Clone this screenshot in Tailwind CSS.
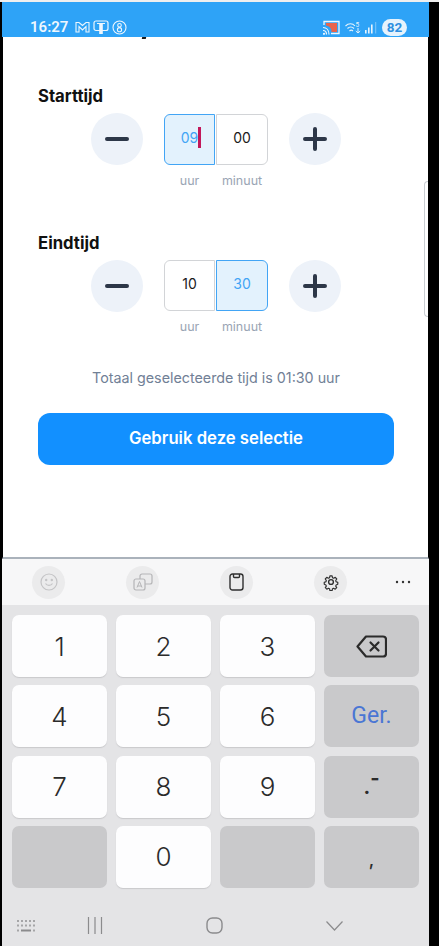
<!DOCTYPE html>
<html lang="en">

<head>
    <meta charset="UTF-8" />
    <meta name="viewport" content="width=device-width, initial-scale=1.0" />
    <script src="https://cdn.jsdelivr.net/npm/@tailwindcss/browser@4"></script>
    <title>Tijd kiezen</title>
</head>

<body class="bg-black font-['Inter',sans-serif]">
    <div class="w-[439px] h-[946px] overflow-hidden">
        <div class="h-[2px] bg-[#efefef]"></div>
        <div class="ml-[2px] w-[427px] h-[944px] flex flex-col">

            <!-- status bar -->
            <header class="h-[35px] bg-[#2ea3f7] flex items-end pl-[28px] pr-[22px] text-white shrink-0">
                <span class="text-[15px] leading-[20px] font-semibold font-['Roboto',sans-serif] text-[#eef7fe]">16:27</span>
                <div class="flex items-center gap-[3px] ml-[7px] h-[20px]">
                    <svg class="w-[15px] h-[12px]" viewBox="0 0 15 12" fill="none" stroke="#eef7fe" stroke-width="1.100"><path d="M1 11V1.500l3 0 3.500 3 3.500-3 3 0V11h-3V5.500L7.500 9 4 5.500V11z" /></svg>
                    <svg class="w-[16px] h-[15px]" viewBox="0 0 16 15" fill="none"><rect x="1" y="1" width="14" height="9.500" rx="2" stroke="#eef7fe" stroke-width="1.200" /><rect x="6.200" y="4" width="3.600" height="10" fill="#eef7fe" /><path d="M4 3.500h8" stroke="#eef7fe" stroke-width="1" /></svg>
                    <svg class="w-[15px] h-[15px]" viewBox="0 0 15 15" fill="none" stroke="#eef7fe" stroke-width="1.100"><circle cx="7.500" cy="7.500" r="6.500" /><circle cx="7.500" cy="5.300" r="1.800" /><circle cx="7.500" cy="9.700" r="2.100" /></svg>
                </div>
                <div class="flex items-center ml-auto h-[20px]">
                    <svg class="w-[17px] h-[15px]" viewBox="0 0 17 15" fill="none"><path d="M1 5V1.500h15v12H8" stroke="#eef7fe" stroke-width="1.300" /><path d="M3 3h11v9H8.500C8.500 8 6.500 6 3 5.500z" fill="#e8644c" /><path d="M0 7.500c3.500 0 6 2.500 6 7M0 10.500c2 0 3.500 1.500 3.500 4" stroke="#eef7fe" stroke-width="1.200" /><circle cx="1" cy="13.800" r="1.100" fill="#eef7fe" /></svg>
                    <svg class="w-[16px] h-[13px] ml-[5px]" viewBox="0 0 16 13" fill="none" stroke="#e6f3fd" stroke-width="1.100"><path d="M.5 5c3-3 7-3 9.500 0M2.500 7.500c2-2 4.500-2 6.500 0M4.500 10c1-1 2.500-1 3.500 0" /><text x="10.500" y="5.500" font-size="6.500" font-family="Roboto" fill="#e6f3fd" stroke="none">5</text><path d="M13 7v5M10.800 10l2.200 2 2.200-2" stroke-width="1" /></svg>
                    <svg class="w-[12px] h-[13px] ml-[4px]" viewBox="0 0 12 13" fill="#e6f3fd"><rect x="0" y="9" width="1.600" height="3.500" /><rect x="3" y="6.500" width="1.600" height="6" /><rect x="6" y="3.500" width="1.600" height="9" /><rect x="10.200" y="1" width="1" height="11.500" opacity=".45" /></svg>
                    <span class="ml-[5px] w-[25px] h-[17px] rounded-full bg-[#e6f3fd] text-[#2e8fe0] text-[13.500px] leading-[17px] font-bold text-center font-['Roboto',sans-serif]">82</span>
                </div>
            </header>

            <!-- sheet -->
            <main class="relative h-[522px] bg-white border-x border-x-black border-b-[2px] border-b-[#aab2bb] pl-[35px] pt-[49px] shrink-0">
                <span class="absolute left-[139px] top-0 w-[4px] h-[2px] bg-[#1a1a1a] -skew-x-12"></span>
                <span class="absolute right-0 top-[144px] w-[4px] h-[136px] rounded-l-[5px] border border-r-0 border-[#c9cdd2]"></span>

                <h2 class="text-[16.700px] leading-[20px] font-bold text-[#111]">Starttijd</h2>
                <div class="flex items-start mt-[7px] ml-[53px] w-[250px]">
                    <button class="w-[52px] h-[52px] rounded-full bg-[#edf2f9] flex items-center justify-center shrink-0">
                        <svg class="w-[24px] h-[24px]" viewBox="0 0 24 24"><path d="M2 12h20" stroke="#2d3748" stroke-width="4" stroke-linecap="round" /></svg>
                    </button>
                    <div class="ml-[21px] mt-px shrink-0">
                        <div class="flex gap-px">
                            <div class="relative w-[51px] h-[51px] rounded-l-[6px] border border-[#42a5f5] bg-[#e3f2fd] text-[#42a5f5] text-[14px] leading-[45px] text-center">09<span class="absolute left-[33px] top-[12px] w-[3px] h-[21px] bg-[#c2185b]"></span></div>
                            <div class="w-[52px] h-[51px] rounded-r-[6px] border border-[#d2d4d7] bg-white text-[#1a1a1a] text-[14px] leading-[45px] text-center">00</div>
                        </div>
                        <div class="flex gap-px mt-[7px] text-[12.500px] leading-[18px] text-[#9aa5b4] text-center">
                            <span class="w-[51px]">uur</span><span class="w-[52px]">minuut</span>
                        </div>
                    </div>
                    <button class="ml-[21px] w-[52px] h-[52px] rounded-full bg-[#edf2f9] flex items-center justify-center shrink-0">
                        <svg class="w-[24px] h-[24px]" viewBox="0 0 24 24"><path d="M2 12h20M12 2v20" stroke="#2d3748" stroke-width="4" stroke-linecap="round" /></svg>
                    </button>
                </div>

                <h2 class="mt-[43px] text-[16.700px] leading-[20px] font-bold text-[#111]">Eindtijd</h2>
                <div class="flex items-start mt-[7px] ml-[53px] w-[250px]">
                    <button class="w-[52px] h-[52px] rounded-full bg-[#edf2f9] flex items-center justify-center shrink-0">
                        <svg class="w-[24px] h-[24px]" viewBox="0 0 24 24"><path d="M2 12h20" stroke="#2d3748" stroke-width="4" stroke-linecap="round" /></svg>
                    </button>
                    <div class="ml-[21px] shrink-0">
                        <div class="flex gap-px">
                            <div class="w-[51px] h-[51px] rounded-l-[6px] border border-[#d2d4d7] bg-white text-[#1a1a1a] text-[14px] leading-[45px] text-center">10</div>
                            <div class="w-[52px] h-[51px] rounded-r-[6px] border border-[#42a5f5] bg-[#e3f2fd] text-[#42a5f5] text-[14px] leading-[45px] text-center">30</div>
                        </div>
                        <div class="flex gap-px mt-[7px] text-[12.500px] leading-[18px] text-[#9aa5b4] text-center">
                            <span class="w-[51px]">uur</span><span class="w-[52px]">minuut</span>
                        </div>
                    </div>
                    <button class="ml-[21px] w-[52px] h-[52px] rounded-full bg-[#edf2f9] flex items-center justify-center shrink-0">
                        <svg class="w-[24px] h-[24px]" viewBox="0 0 24 24"><path d="M2 12h20M12 2v20" stroke="#2d3748" stroke-width="4" stroke-linecap="round" /></svg>
                    </button>
                </div>

                <p class="mt-[32px] w-[356px] text-center text-[14.300px] leading-[20px] text-[#718096]">Totaal geselecteerde tijd is 01:30 uur</p>
                <button class="mt-[25px] w-[356px] h-[52px] rounded-[12px] bg-[#1290ff] text-white text-[16.700px] font-semibold">Gebruik deze selectie</button>
            </main>

            <!-- keyboard toolbar -->
            <div class="h-[46px] bg-[#f7f7f8] flex items-center pl-[30px] shrink-0">
                <div class="w-[33px] h-[33px] rounded-full bg-[#ebebec] flex items-center justify-center">
                    <svg class="w-[18px] h-[18px]" viewBox="0 0 18 18" fill="none" stroke="#c4c4c6" stroke-width="1.200"><circle cx="9" cy="9" r="8" /><path d="M5.500 10.500c1.500 2.500 5.500 2.500 7 0" /><circle cx="6.200" cy="7" r=".6" fill="#c4c4c6" /><circle cx="11.800" cy="7" r=".6" fill="#c4c4c6" /></svg>
                </div>
                <div class="ml-[61px] w-[33px] h-[33px] rounded-full bg-[#ebebec] flex items-center justify-center">
                    <svg class="w-[20px] h-[18px]" viewBox="0 0 20 18" fill="none" stroke="#b5b5b7" stroke-width="1.200"><rect x="1" y="6" width="11" height="11" rx="2" /><path d="M7 6V3a2 2 0 0 1 2-2h8a2 2 0 0 1 2 2v6a2 2 0 0 1-2 2h-5" /><path d="M4 14.500l2.500-6 2.500 6M4.800 13h3.400" stroke-width="1" /></svg>
                </div>
                <div class="ml-[61px] w-[33px] h-[33px] rounded-full bg-[#ebebec] flex items-center justify-center">
                    <svg class="w-[15px] h-[18px]" viewBox="0 0 15 18" fill="none" stroke="#2f2f2f" stroke-width="1.400"><rect x="1" y="1" width="13" height="16" rx="2.500" /><path d="M4.500 1v2.500a1 1 0 0 0 1 1h4a1 1 0 0 0 1-1V1" /></svg>
                </div>
                <div class="ml-[61px] w-[33px] h-[33px] rounded-full bg-[#ebebec] flex items-center justify-center">
                    <svg class="w-[18px] h-[18px]" viewBox="0 0 24 24" fill="none" stroke="#2f2f2f" stroke-width="1.800" stroke-linejoin="round"><circle cx="12" cy="12" r="3.200" /><path d="M10.300 2.500h3.400l.6 2.900 1.700.8 2.600-1.400 2.300 2.500-1.600 2.400.6 1.800 2.600 1v3l-2.600 1-.6 1.800 1.500 2.400-2.300 2.400-2.500-1.400-1.700.7-.6 2.900h-3.400l-.6-2.900-1.700-.7-2.500 1.400-2.300-2.400 1.500-2.400-.6-1.800-2.600-1v-3l2.600-1 .6-1.800-1.600-2.400 2.300-2.500 2.600 1.400 1.700-.8z" transform="translate(1.700 1.700) scale(.86)" /></svg>
                </div>
                <svg class="ml-[48px] w-[16px] h-[4px]" viewBox="0 0 16 4" fill="#333"><circle cx="2" cy="2" r="1.200" /><circle cx="8" cy="2" r="1.200" /><circle cx="14" cy="2" r="1.200" /></svg>
            </div>

            <!-- keys -->
            <div class="flex-1 bg-[#e4e4e6] flex flex-col">
                <div class="grid grid-cols-[95px_95px_95px_95px] grid-rows-[62px_62px_62px_62px] gap-x-[9px] gap-y-[8.300px] pl-[10px] pt-[10px] text-[26px] font-light text-[#2b2b2b]">
                    <div class="rounded-[7px] bg-[#fdfdfe] shadow-[0_1px_1px_#c9c9cb] flex items-center justify-center">1</div>
                    <div class="rounded-[7px] bg-[#fdfdfe] shadow-[0_1px_1px_#c9c9cb] flex items-center justify-center">2</div>
                    <div class="rounded-[7px] bg-[#fdfdfe] shadow-[0_1px_1px_#c9c9cb] flex items-center justify-center">3</div>
                    <div class="rounded-[7px] bg-[#c9c9cb] flex items-center justify-center">
                        <svg class="w-[31px] h-[23px]" viewBox="0 0 31 23" fill="none" stroke="#2b2b2b" stroke-width="2.200" stroke-linejoin="round"><path d="M10 1.500h17a3 3 0 0 1 3 3v14a3 3 0 0 1-3 3H10L1.500 11.500z" /><path d="M14.500 7.500l8 8M22.500 7.500l-8 8" stroke-linecap="round" /></svg>
                    </div>

                    <div class="rounded-[7px] bg-[#fdfdfe] shadow-[0_1px_1px_#c9c9cb] flex items-center justify-center">4</div>
                    <div class="rounded-[7px] bg-[#fdfdfe] shadow-[0_1px_1px_#c9c9cb] flex items-center justify-center">5</div>
                    <div class="rounded-[7px] bg-[#fdfdfe] shadow-[0_1px_1px_#c9c9cb] flex items-center justify-center">6</div>
                    <div class="rounded-[7px] bg-[#c9c9cb] flex items-center justify-center text-[23px] font-normal font-['Roboto',sans-serif] text-[#4a76d4]">Ger.</div>

                    <div class="rounded-[7px] bg-[#fdfdfe] shadow-[0_1px_1px_#c9c9cb] flex items-center justify-center">7</div>
                    <div class="rounded-[7px] bg-[#fdfdfe] shadow-[0_1px_1px_#c9c9cb] flex items-center justify-center">8</div>
                    <div class="rounded-[7px] bg-[#fdfdfe] shadow-[0_1px_1px_#c9c9cb] flex items-center justify-center">9</div>
                    <div class="rounded-[7px] bg-[#c9c9cb] flex items-center justify-center text-[20px] font-bold"><span>.</span><span class="-translate-y-[9px]">-</span></div>

                    <div class="rounded-[7px] bg-[#c9c9cb]"></div>
                    <div class="rounded-[7px] bg-[#fdfdfe] shadow-[0_1px_1px_#c9c9cb] flex items-center justify-center">0</div>
                    <div class="rounded-[7px] bg-[#c9c9cb]"></div>
                    <div class="rounded-[7px] bg-[#c9c9cb] flex items-center justify-center text-[18px] font-medium"><span class="translate-y-[3px]">,</span></div>
                </div>

                <!-- nav bar -->
                <div class="flex items-center h-[58px] pl-[14px] pt-[18px]">
                    <svg class="w-[20px] h-[12px]" viewBox="0 0 20 12" fill="#8b8b8d">
                        <g opacity=".7"><rect x="1" y="0" width="2" height="2" /><rect x="5" y="0" width="2" height="2" /><rect x="9" y="0" width="2" height="2" /><rect x="13" y="0" width="2" height="2" /><rect x="17" y="0" width="2" height="2" /><rect x="1" y="4.500" width="2" height="2" /><rect x="5" y="4.500" width="2" height="2" /><rect x="9" y="4.500" width="2" height="2" /><rect x="13" y="4.500" width="2" height="2" /><rect x="17" y="4.500" width="2" height="2" /><rect x="1" y="9.500" width="2" height="2" /><rect x="17" y="9.500" width="2" height="2" /></g>
                        <rect x="5" y="9.500" width="10" height="2" />
                    </svg>
                    <svg class="ml-[51px] w-[16px] h-[17px]" viewBox="0 0 16 17" stroke="#8b8b8d" stroke-width="1.200"><path d="M1.500 0v17M8 0v17M14.500 0v17" /></svg>
                    <svg class="ml-[103px] w-[17px] h-[17px]" viewBox="0 0 17 17" fill="none" stroke="#8b8b8d" stroke-width="1.400"><rect x="1" y="1" width="15" height="15" rx="5.500" /></svg>
                    <svg class="ml-[103px] w-[17px] h-[10px]" viewBox="0 0 17 10" fill="none" stroke="#8b8b8d" stroke-width="1.200"><path d="M.5.500l8 8.500 8-8.500" /></svg>
                </div>
            </div>
        </div>
    </div>
</body>

</html>
